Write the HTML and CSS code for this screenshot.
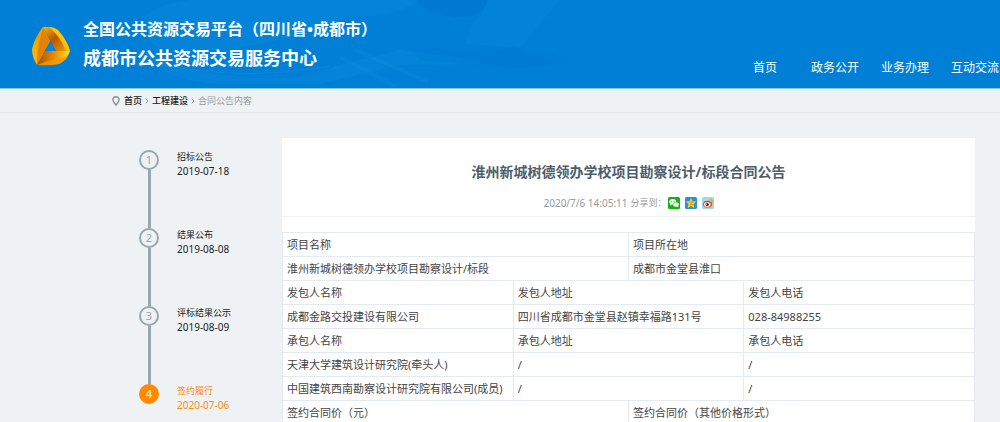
FILE: index.html
```html
<!DOCTYPE html>
<html lang="zh-CN">
<head>
<meta charset="utf-8">
<title>成都市公共资源交易服务中心</title>
<link rel="stylesheet" href="styles.css">
</head>
<body>
<div class="page">
  <header class="header">
    <svg class="header-art" viewBox="0 0 700 88" preserveAspectRatio="xMinYMin slice" aria-hidden="true">
      <path d="M142 22Q150 5 190 0H420Q395 17 350 17Q240 60 160 48Q142 40 142 22Z" fill="#0a8bdc" opacity=".4"/>
      <path d="M416 0H488Q483 17 460 17Q430 16 416 0Z" fill="#0076d2" opacity=".7"/>
      <path d="M488 0H560L520 48L466 44Q468 25 481 15Z" fill="#0688dc" opacity=".4"/>
      <path d="M145 50Q160 68 230 76Q300 84 335 66L400 50L480 60V64L400 65L320 84H220Q150 78 145 50Z" fill="#0a8bdc" opacity=".4"/>
      <path d="M165 58Q235 74 320 60M155 63Q240 82 330 66" fill="none" stroke="#3099df" opacity=".3"/>
      <path d="M355 50L428 82M340 57L395 86" stroke="#0c8edf" stroke-width="4" opacity=".3"/>
      <path d="M410 48L500 50L515 46L530 55L545 51L570 62L520 68L420 60Z" fill="#0078d2" opacity=".4"/>
    </svg>
    <a class="brand" href="#">
      <svg class="logo" viewBox="0 0 40 40" aria-hidden="true">
        <defs>
          <linearGradient id="g1" x1="0" y1="1" x2="1" y2="0"><stop offset="0" stop-color="#ffc400"/><stop offset=".55" stop-color="#f39a00"/><stop offset="1" stop-color="#ffc20a"/></linearGradient>
          <linearGradient id="g2" x1="0" y1="0" x2="1" y2="1"><stop offset="0" stop-color="#ffb80a"/><stop offset=".45" stop-color="#b95500"/><stop offset="1" stop-color="#f8a500"/></linearGradient>
          <linearGradient id="g3" x1="0" y1="0" x2="1" y2="0"><stop offset="0" stop-color="#a94c00"/><stop offset=".5" stop-color="#e88a00"/><stop offset="1" stop-color="#ffe02a"/></linearGradient>
        </defs>
        <path d="M12 1Q4 11 1 23Q1 31 6 39L19 15Z" fill="url(#g1)"/>
        <path d="M12 1Q14 8 19 15L6 39Q5 26 12 1Z" fill="#d97800" opacity=".75"/>
        <path d="M12 1Q20 0 27 4Q36 14 39 25H25Z" fill="url(#g2)"/>
        <path d="M18 1Q23 1 27 4Q36 14 39 25H35Q29 10 18 1Z" fill="#ffc20a"/>
        <path d="M6 39L14 25H39Q36 34 28 38Q17 40 6 39Z" fill="url(#g3)"/>
        <path d="M6 39Q19 33 37 31Q33 36 28 38Q17 40 6 39Z" fill="#f29a00" opacity=".8"/>
        <path d="M19 16L25 25H14Z" fill="#0b83dc"/>
      </svg>
      <span class="brand-text">
        <span class="brand-platform">全国公共资源交易平台（四川省<span class="dot">•</span>成都市）</span>
        <span class="brand-center">成都市公共资源交易服务中心</span>
      </span>
    </a>
    <nav class="nav">
      <a href="#">首页</a>
      <a href="#">政务公开</a>
      <a href="#">业务办理</a>
      <a href="#">互动交流</a>
    </nav>
  </header>

  <nav class="crumbs" aria-label="当前位置">
    <svg class="pin" viewBox="0 0 8 10" aria-hidden="true"><path d="M4 9.2C2.700 7.200 .9 5.500 .9 3.800a3.100 3.100 0 0 1 6.200 0C7.100 5.500 5.300 7.200 4 9.200Z" fill="none" stroke="#8c9193" stroke-width="1.400"/></svg>
    <a href="#">首页</a>
    <svg class="chev" viewBox="0 0 4 6" aria-hidden="true"><path d="M.7.7L3 3L.7 5.300" fill="none" stroke="#999"/></svg>
    <a href="#">工程建设</a>
    <svg class="chev" viewBox="0 0 4 6" aria-hidden="true"><path d="M.7.7L3 3L.7 5.300" fill="none" stroke="#999"/></svg>
    <span class="here">合同公告内容</span>
  </nav>

  <main class="main">
    <ol class="steps">
      <li class="step"><span class="num">1</span><div><p class="name">招标公告</p><time>2019-07-18</time></div></li>
      <li class="step"><span class="num">2</span><div><p class="name">结果公布</p><time>2019-08-08</time></div></li>
      <li class="step"><span class="num">3</span><div><p class="name">评标结果公示</p><time>2019-08-09</time></div></li>
      <li class="step current"><span class="num">4</span><div><p class="name">签约履行</p><time>2020-07-06</time></div></li>
    </ol>

    <article class="card">
      <header class="card-head">
        <h1>淮州新城树德领办学校项目勘察设计/标段合同公告</h1>
        <div class="meta">
          <time>2020/7/6 14:05:11</time>
          <span class="share-label">分享到：</span>
          <a class="share" href="#" aria-label="微信"><svg viewBox="0 0 12 12"><rect width="12" height="12" rx="1.500" fill="#12b312"/><ellipse cx="4.700" cy="4.800" rx="3.500" ry="2.900" fill="#fff"/><path d="M2.500 6.500L2.300 8.600L4.500 7.400Z" fill="#fff"/><ellipse cx="8" cy="7.600" rx="3.100" ry="2.500" fill="#fff" stroke="#12b312" stroke-width=".5"/><path d="M9 9.500L10.200 10.600L10 8.800Z" fill="#fff"/><g fill="#12b312"><circle cx="3.500" cy="4.200" r=".5"/><circle cx="5.900" cy="4.200" r=".5"/><circle cx="7" cy="7.200" r=".4"/><circle cx="9" cy="7.200" r=".4"/></g></svg></a>
          <a class="share" href="#" aria-label="QQ空间"><svg viewBox="0 0 12 12"><rect width="12" height="12" rx="1.500" fill="#2891dc"/><path d="M6 .9L7.500 4.200L11.200 4.600L8.500 7.100L9.300 10.900L6 9L2.700 10.900L3.500 7.100L.8 4.600L4.500 4.200Z" fill="#ffd32e"/><path d="M4 5H7.700L4.700 7.700H8.200" fill="none" stroke="#e58a00" stroke-width=".9"/></svg></a>
          <a class="share" href="#" aria-label="微博"><svg viewBox="0 0 12 12"><rect width="12" height="12" rx="1.500" fill="#9bdcec"/><ellipse cx="5.600" cy="7.200" rx="4.500" ry="3.400" fill="#e64a19"/><ellipse cx="5.300" cy="7.500" rx="3.300" ry="2.300" fill="#fff"/><circle cx="5.200" cy="7.500" r="1.600" fill="#222"/><circle cx="4.700" cy="7.200" r=".5" fill="#fff"/><path d="M7.500 2A3 3 0 0 1 10.700 5.500M7.700 3.700Q9 3.600 9 5" fill="none" stroke="#f29a1a" stroke-width="1"/></svg></a>
        </div>
      </header>
      <table class="info">
        <colgroup><col><col><col><col><col><col></colgroup>
        <tbody>
          <tr><th colspan="3">项目名称</th><th colspan="3">项目所在地</th></tr>
          <tr><td colspan="3">淮州新城树德领办学校项目勘察设计/标段</td><td colspan="3">成都市金堂县淮口</td></tr>
          <tr><th colspan="2">发包人名称</th><th colspan="2">发包人地址</th><th colspan="2">发包人电话</th></tr>
          <tr><td colspan="2">成都金路交投建设有限公司</td><td colspan="2">四川省成都市金堂县赵镇幸福路131号</td><td colspan="2">028-84988255</td></tr>
          <tr><th colspan="2">承包人名称</th><th colspan="2">承包人地址</th><th colspan="2">承包人电话</th></tr>
          <tr><td colspan="2">天津大学建筑设计研究院(牵头人)</td><td colspan="2">/</td><td colspan="2">/</td></tr>
          <tr><td colspan="2">中国建筑西南勘察设计研究院有限公司(成员)</td><td colspan="2">/</td><td colspan="2">/</td></tr>
          <tr><th colspan="3">签约合同价（元）</th><th colspan="3">签约合同价（其他价格形式）</th></tr>
        </tbody>
      </table>
    </article>
  </main>
</div>
</body>
</html>
```
FILE: styles.css
```css
* {
  box-sizing: border-box;
}

body {
  margin: 0;
  background: #eef2f5;
  color: #444;
  font-family: "Noto Sans", "Noto Sans CJK SC", sans-serif;
  font-size: 11px;
}

a {
  color: inherit;
  text-decoration: none;
}

h1,
p,
ol {
  margin: 0;
  padding: 0;
}

.page {
  height: 100vh;
  overflow: hidden;
}

/* Header */
.header {
  position: relative;
  display: flex;
  justify-content: space-between;
  height: 89px;
  background: #007fd7;
  border-bottom: 1px solid #8cc6ee;
  color: #fff;
}

.header-art {
  position: absolute;
  top: 0;
  left: 0;
  width: 700px;
  height: 88px;
}

.brand {
  position: relative;
  display: flex;
  gap: 12px;
  padding: 14px 0 0 31px;
}

.logo {
  width: 40px;
  height: 40px;
  margin-top: 12px;
}

.brand-text {
  display: flex;
  flex-direction: column;
  font-family: "Noto Sans CJK SC", sans-serif;
  font-weight: 700;
  line-height: 28px;
  white-space: nowrap;
}

.brand-platform {
  font-size: 16px;
}

.dot {
  font-family: "Noto Sans", sans-serif;
}

.brand-center {
  font-size: 18px;
}

.nav {
  position: relative;
  display: flex;
  margin-right: -10px;
  padding-top: 59px;
  font-size: 12px;
  line-height: 18px;
}

.nav a {
  width: 70px;
  text-align: center;
}

/* Breadcrumb */
.crumbs {
  display: flex;
  align-items: center;
  gap: 3px;
  height: 24px;
  padding-left: 112px;
  border-bottom: 1px solid #e4e7ea;
  color: #222;
  font-size: 9px;
  font-weight: 500;
}

.pin {
  width: 8px;
  height: 10px;
  margin-right: 1px;
}

.chev {
  width: 4px;
  height: 6px;
}

.here {
  color: #999;
  font-weight: 400;
}

/* Content */
.main {
  display: grid;
  grid-template-columns: 282px 1fr;
  padding: 25px 25px 0 0;
}

.steps {
  padding: 12px 0 0 139px;
  list-style: none;
}

.step {
  position: relative;
  display: flex;
  gap: 18px;
  height: 78px;
  color: #222;
  font-size: 10px;
  line-height: 14px;
}

.step:not(:last-child)::before {
  content: "";
  position: absolute;
  top: 20px;
  left: 9px;
  width: 3px;
  height: 58px;
  background: #99a6ae;
}

.num {
  width: 20px;
  height: 20px;
  border: 2px solid #99a6ae;
  border-radius: 50%;
  color: #99a6ae;
  font-size: 11px;
  line-height: 16px;
  text-align: center;
}

.step .name {
  font-size: 9px;
}

.step time {
  display: block;
}

.current {
  color: #ff8a0a;
}

.current .num {
  border-color: #ff8a00;
  background: #ff8a00;
  color: #fff;
}

.card {
  min-width: 0;
  padding-bottom: 24px;
  background: #fff;
}

.card-head {
  height: 79px;
  padding-top: 24px;
  border-bottom: 1px solid #f0f1f3;
  text-align: center;
}

.card-head h1 {
  color: #4d5d6c;
  font-size: 14px;
  font-weight: 700;
  line-height: 20px;
}

.meta {
  display: flex;
  justify-content: center;
  align-items: center;
  gap: 5px;
  margin-top: 14px;
  color: #999;
  font-size: 10px;
  line-height: 14px;
}

.share-label {
  margin: 0 -4px 0 -2px;
  font-family: "Noto Sans CJK TC", sans-serif;
  font-size: 9px;
}

.share,
.share svg {
  display: block;
  width: 12px;
  height: 12px;
}

.info {
  width: 100%;
  margin-top: 15px;
  border-collapse: collapse;
  table-layout: fixed;
}

.info th,
.info td {
  height: 24px;
  padding: 0 4px;
  border: 1px solid #e3ebf2;
  font-weight: 400;
  line-height: 16px;
  text-align: left;
  white-space: nowrap;
}
```
